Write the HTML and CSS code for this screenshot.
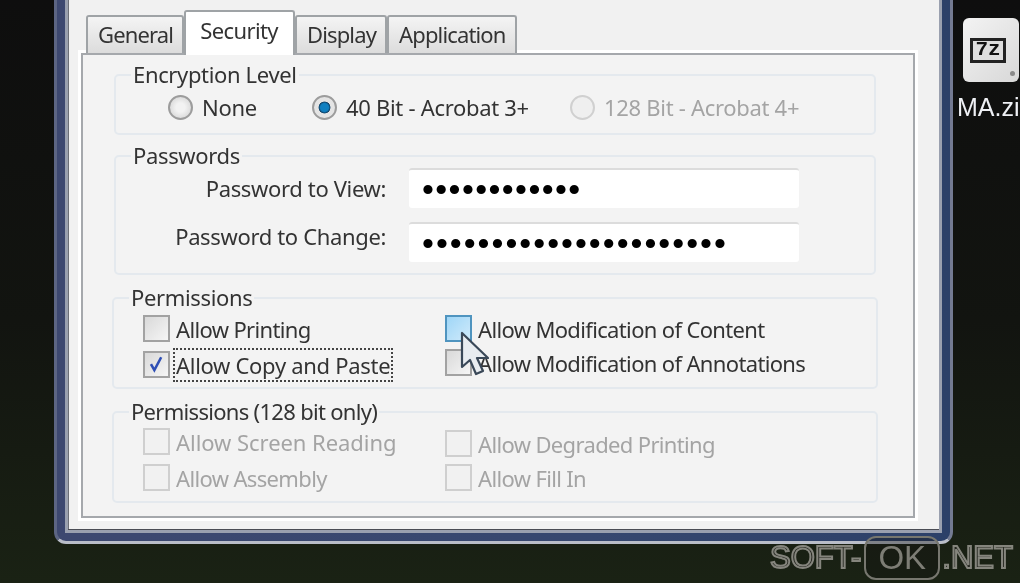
FILE: index.html
```html
<!DOCTYPE html>
<html lang="en">
<head>
  <meta charset="UTF-8">
  <title>Security</title>
  <link rel="stylesheet" href="styles.css">
</head>
<body>
  <div class="desktop">
    <div class="window">
      <div class="dialog">
        <div class="tabs">
          <div class="tab">General</div>
          <div class="tab active">Security</div>
          <div class="tab">Display</div>
          <div class="tab">Application</div>
        </div>
        <div class="pane">
          <fieldset class="group encryption">
            <legend>Encryption Level</legend>
            <div class="radios">
              <label class="opt none"><span class="radio"></span>None</label>
              <label class="opt bit40"><span class="radio on"></span>40 Bit - Acrobat 3+</label>
              <label class="opt off"><span class="radio"></span>128 Bit - Acrobat 4+</label>
            </div>
          </fieldset>
          <fieldset class="group passwords">
            <legend>Passwords</legend>
            <div class="pw-row">
              <label>Password to View:</label>
              <input type="password" value="123456789012" readonly>
            </div>
            <div class="pw-row second">
              <label>Password to Change:</label>
              <input type="password" value="1234567890123456789012" readonly>
            </div>
          </fieldset>
          <fieldset class="group wide perms">
            <legend>Permissions</legend>
            <div class="checks">
              <label class="opt"><span class="box"></span>Allow Printing</label>
              <label class="opt"><span class="box hover"></span>Allow Modification of Content</label>
              <label class="opt"><span class="box">
                <svg viewBox="0 0 27 27" width="23" height="23"><path d="M7 13l4 7 8-15" fill="none" stroke="#2f4fb5" stroke-width="3"/></svg>
              </span><span class="focus">Allow Copy and Paste</span></label>
              <label class="opt raised"><span class="box"></span>Allow Modification of Annotations</label>
            </div>
          </fieldset>
          <fieldset class="group wide perms128">
            <legend class="tight">Permissions (128 bit only)</legend>
            <div class="checks off">
              <label class="opt loose"><span class="box"></span>Allow Screen Reading</label>
              <label class="opt lowered"><span class="box"></span>Allow Degraded Printing</label>
              <label class="opt"><span class="box"></span>Allow Assembly</label>
              <label class="opt"><span class="box"></span>Allow Fill In</label>
            </div>
          </fieldset>
        </div>
      </div>
    </div>
    <div class="desk-icon">
      <div class="zip">
        <div class="zip-logo">7z</div>
      </div>
      <div class="zip-name">MA.zi</div>
    </div>
    <svg class="cursor" viewBox="0 0 30 48" width="30" height="48">
      <path d="M3 2v34l8-7 6 14 7-3-6-13h11z" fill="#e8ecf0" stroke="#3a4858" stroke-width="2.2" stroke-linejoin="round"/>
    </svg>
    <div class="mark"><span class="mark-out">SOFT-</span><span class="mark-ok">OK</span><span class="mark-out">.NET</span></div>
  </div>
</body>
</html>
```
FILE: styles.css
```css
* {
  box-sizing: border-box;
}

html, body {
  margin: 0;
  height: 583px;
  overflow: hidden;
  background: #111;
}

.desktop {
  position: relative;
  width: 1020px;
  height: 583px;
  display: flex;
  align-items: flex-start;
  padding-left: 54px;
  overflow: hidden;
  background: linear-gradient(180deg, #0e0e0e 0%, #121410 55%, #1a2214 100%);
  font-family: "Noto Sans", sans-serif;
  font-size: 22px;
  color: #333;
  filter: blur(0.6px);
}

/* window frame */
.window {
  width: 899px;
  height: 544px;
  flex: none;
  padding: 0 8px 8px 8px;
  background: linear-gradient(90deg, #3d4870, #36476f 60%, #2c4068);
  border-style: solid;
  border-width: 0 3px 3px 3px;
  border-color: #5c6583 #737a92 #b9bdc8 #5c6583;
  border-radius: 0 0 12px 12px;
}

.dialog {
  height: 100%;
  padding: 10px 24px 0 13px;
  background: #f1f1f1;
  border: solid #9aa0af;
  border-width: 0 3px 3px 3px;
  box-shadow: inset 0 -1px 0 #4a4c54, inset 1px 0 0 #6d7078;
}

/* tabs */
.tabs {
  display: flex;
  align-items: flex-end;
  height: 43px;
  padding-left: 5px;
  position: relative;
  z-index: 1;
}

.tab {
  height: 38px;
  padding: 1px 9px 0 10px;
  border: 2px solid #9fa3a6;
  border-bottom: 0;
  border-radius: 3px 3px 0 0;
  background: linear-gradient(180deg, #f4f4f4, #dcdcdc);
  line-height: 32px;
  letter-spacing: -0.85px;
}

.tab.active {
  height: 45px;
  margin-bottom: -2px;
  padding: 2px 15px 0 14px;
  background: #fff;
  letter-spacing: -0.6px;
}

.pane {
  height: 465px;
  width: 834px;
  padding: 0 37px 0 31px;
  background: #f3f3f3;
  border: 2px solid #a5a8ac;
  box-shadow: 0 0 0 3px #fff;
}

/* group boxes */
.group {
  margin: 7px 0 0;
  padding: 0 0 0 14px;
  border: 2px solid #e4e9ee;
  border-radius: 5px;
  min-inline-size: 0;
}

.group legend {
  padding: 0 2px 2px;
  margin-left: 1px;
  line-height: 24px;
  letter-spacing: -0.35px;
}

.group legend.tight {
  letter-spacing: -0.7px;
}

.encryption { height: 73px; }

.passwords {
  height: 132px;
  margin-top: 8px;
}

.wide {
  margin-left: -2px;
  margin-right: -2px;
  height: 104px;
}

.perms { margin-top: 10px; }
.perms128 { margin-top: 10px; }

.opt {
  display: flex;
  align-items: center;
  letter-spacing: -0.3px;
  white-space: nowrap;
}

.radios {
  display: flex;
  padding: 4px 0 0 38px;
}

.none { width: 144px; }
.bit40 { width: 258px; }

.opt.off {
  color: #a4a4a4;
}

.opt.off .radio {
  border-color: #d0d0d0;
  background: #efefef;
}

.radio {
  width: 25px;
  height: 25px;
  margin-right: 9px;
  flex: none;
  border: 2px solid #9c9c9c;
  border-radius: 50%;
  background: radial-gradient(circle, #f2f2f2 30%, #d8d8d8 80%);
}

.radio.on {
  background: radial-gradient(circle, #0f7fc0 0 27%, #103f63 38%, #e4e4e4 42% 70%, #cfcfcf);
}

/* passwords */
.pw-row {
  display: flex;
  align-items: center;
  height: 40px;
  margin-bottom: 14px;
  margin-top: -1px;
  letter-spacing: -0.35px;
}

.pw-row.second {
  margin-top: 0;
}

.pw-row label {
  width: 256px;
  margin-right: 23px;
  text-align: right;
}

.pw-row.second label {
  padding-bottom: 12px;
}

.pw-row input {
  width: 390px;
  height: 40px;
  padding: 0 0 0 13px;
  border: 0;
  border-top: 2px solid #dcdcdc;
  border-radius: 3px;
  outline: 0;
  background: #fff;
  color: #000;
  font-family: "Liberation Sans", sans-serif;
  font-size: 34px;
  letter-spacing: 1.4px;
}

.pw-row.second input {
  letter-spacing: 2px;
}

/* checkboxes */
.checks {
  display: grid;
  grid-template-columns: 302px 1fr;
  row-gap: 9px;
  padding: 4px 0 0 15px;
}

.checks .opt {
  height: 27px;
  letter-spacing: -0.65px;
}

.checks .loose {
  letter-spacing: -0.05px;
}

.checks .raised {
  margin-top: -2px;
}

.checks .lowered {
  margin: 2px 0 -2px;
}

.checks.off {
  padding-top: 3px;
  color: #a4a4a4;
}

.checks.off .box {
  border-color: #cfcfcf;
  background: #f1f1f1;
}

.box {
  width: 27px;
  height: 27px;
  margin-right: 6px;
  flex: none;
  display: flex;
  border: 2px solid #a2a2a2;
  background: linear-gradient(135deg, #d9d9d9, #f5f5f5);
}

.box.hover {
  border-color: #4f94bf;
  background: linear-gradient(135deg, #9fd6f7, #cfeafb);
}

.focus {
  margin: -3px 0 -3px -3px;
  padding: 0 1px;
  border: 2px dotted #444;
  letter-spacing: -0.3px;
}

/* right hand desktop icon */
.desk-icon {
  flex: none;
  width: 70px;
  padding: 18px 0 0 10px;
  color: #eef0f4;
  font-family: "Liberation Sans", sans-serif;
  font-size: 25px;
}

.zip {
  position: relative;
  display: flex;
  align-items: center;
  justify-content: center;
  width: 56px;
  height: 64px;
  padding-right: 6px;
  border-radius: 6px;
  background: linear-gradient(135deg, #f3f3f3, #d8d8d8);
}

.zip::after {
  content: "";
  position: absolute;
  right: 4px;
  bottom: 6px;
  width: 5px;
  height: 5px;
  border-radius: 50%;
  background: #8a8a8a;
}

.zip-logo {
  width: 36px;
  height: 25px;
  border: 3px solid #222;
  background: #ddd;
  color: #111;
  font-family: "Liberation Mono", monospace;
  font-size: 21px;
  font-weight: 700;
  line-height: 18px;
  text-align: center;
}

.zip-name {
  margin: 11px 0 0 -6px;
  white-space: nowrap;
}

/* overlays */
.cursor {
  position: absolute;
  left: 459px;
  top: 331px;
}

.mark {
  position: absolute;
  left: 770px;
  top: 536px;
  display: flex;
  align-items: center;
  height: 44px;
  font-family: "Liberation Sans", sans-serif;
  font-size: 31px;
  color: #7d7d75;
}

.mark-out {
  color: #24261f;
  -webkit-text-stroke: 2px #85857d;
}

.mark-ok {
  width: 76px;
  height: 44px;
  margin: 0 2px 0 3px;
  border: 2px solid #77776f;
  border-radius: 12px;
  background: rgba(20, 20, 16, 0.35);
  font-size: 33px;
  line-height: 40px;
  text-align: center;
}
```
